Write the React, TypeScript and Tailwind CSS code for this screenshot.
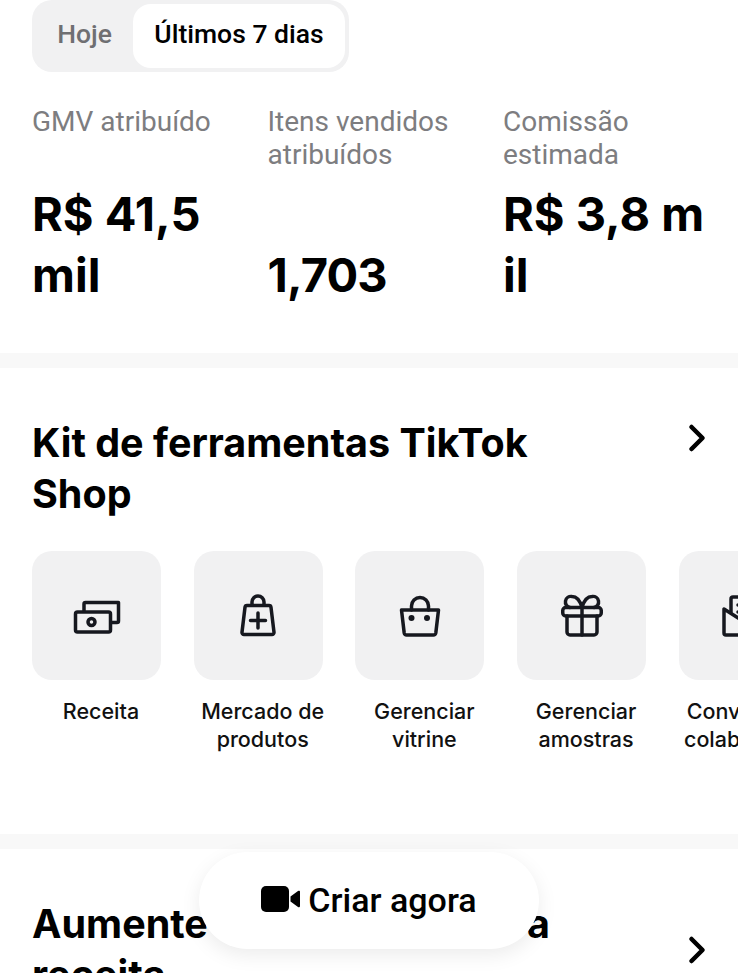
import { ChevronRight } from "lucide-react";
import type { ReactNode } from "react";

const metrics = [
  { label: "GMV atribuído", value: ["R$ 41,5", "mil"], valueClass: "" },
  { label: "Itens vendidos atribuídos", value: ["1,703"], valueClass: "tracking-[-0.8px]" },
  { label: "Comissão estimada", value: ["R$ 3,8 m", "il"], valueClass: "" },
];

function IconFrame({ children }: { children: ReactNode }) {
  return (
    <svg
      viewBox="0 0 48 48"
      className="h-12 w-12 text-[#16181f]"
      fill="none"
      stroke="currentColor"
      strokeWidth="3.5"
      strokeLinecap="round"
      strokeLinejoin="round"
    >
      {children}
    </svg>
  );
}

const tools: { label: string; icon: ReactNode }[] = [
  {
    label: "Receita",
    icon: (
      <IconFrame>
        <rect x="2.5" y="20" width="35" height="20" rx="2" />
        <path d="M11 19v-7a1.5 1.5 0 0 1 1.500-1.500H45.500V29a1.500 1.500 0 0 1-1.500 1.500h-6" />
        <circle cx="18.500" cy="30" r="3.500" />
      </IconFrame>
    ),
  },
  {
    label: "Mercado de produtos",
    icon: (
      <IconFrame>
        <path d="M13 13.500h22a2 2 0 0 1 2 1.800l3 25a2 2 0 0 1-2 2.200H10a2 2 0 0 1-2-2.200l3-25a2 2 0 0 1 2-1.800z" />
        <path d="M18 13v-3a6 6 0 0 1 12 0v3" />
        <path d="M24 21v15M16.500 28.500h15" />
      </IconFrame>
    ),
  },
  {
    label: "Gerenciar vitrine",
    icon: (
      <IconFrame>
        <path d="M5.500 18h37l-2.700 23a2.500 2.500 0 0 1-2.500 2H10.700a2.500 2.500 0 0 1-2.500-2L5.500 18z" />
        <path d="M15.500 18v-4a8.500 8.500 0 0 1 17 0v4" />
        <circle cx="15.500" cy="26" r="3" fill="currentColor" stroke="none" />
        <circle cx="31" cy="26" r="3" fill="currentColor" stroke="none" />
      </IconFrame>
    ),
  },
  {
    label: "Gerenciar amostras",
    icon: (
      <IconFrame>
        <rect x="4.750" y="15.500" width="38.500" height="8.500" rx="3" />
        <path d="M9 24v16a3 3 0 0 0 3 3h24a3 3 0 0 0 3-3V24" />
        <path d="M24 15.500V43" />
        <path d="M24 15.500c-2-7-6-11-10-11a5.500 5.500 0 0 0-2 11M24 15.500c2-7 6-11 10-11a5.500 5.500 0 0 1 2 11" />
      </IconFrame>
    ),
  },
  {
    label: "Convites de colaboração",
    icon: (
      <IconFrame>
        <path d="M12 20V7a2 2 0 0 1 2-2h24v20" />
        <path d="M19 13h8M19 20h8" />
        <path d="M5 17v24a2 2 0 0 0 2 2h36V17L24 29 5 17z" />
      </IconFrame>
    ),
  },
];

export default function App() {
  return (
    <div className="relative h-[973px] w-[738px] overflow-hidden bg-white font-['Inter',sans-serif] text-black">
      {/* Period tabs and metrics */}
      <div className="px-8">
        <div className="flex h-[72px] w-[317px] items-center rounded-[20px] bg-[#f1f1f2] p-1 font-['Roboto',sans-serif] text-[26.500px] font-medium">
          <span className="w-[97px] pb-1 text-center text-[#6f6f72]">Hoje</span>
          <span className="flex h-16 w-[212px] items-center justify-center rounded-[18px] bg-white pb-1">Últimos 7 dias</span>
        </div>
        <div className="mt-[33px] grid h-[248px] grid-cols-[211.5px_211.5px_211.5px] gap-x-6">
          {metrics.map((metric) => (
            <div key={metric.label} className="flex flex-col">
              <div className="font-['Roboto',sans-serif] text-[28px] leading-[33px] text-[#7d7d80]">{metric.label}</div>
              <div className={`flex flex-1 flex-col justify-end pb-[48px] text-[47px] leading-[61px] font-bold ${metric.valueClass}`}>
                {metric.value.map((line) => (
                  <div key={line}>{line}</div>
                ))}
              </div>
            </div>
          ))}
        </div>
      </div>

      <div className="h-[15px] bg-[#f8f8f8]" />

      {/* TikTok Shop toolkit */}
      <div className="h-[466px] pt-[50px]">
        <div className="flex items-start justify-between pr-[19px] pl-8">
          <h2 className="w-[560px] text-[39.500px] leading-[51px] font-bold">Kit de ferramentas TikTok Shop</h2>
          <ChevronRight className="-mt-0.5 h-11 w-11" strokeWidth={2.5} />
        </div>
        <div className="mt-[31px] flex gap-[23.700px] pl-8">
          {tools.map((tool) => (
            <div key={tool.label} className="w-[138px] shrink-0">
              <div className="flex h-[129px] w-[129px] items-center justify-center rounded-[20px] bg-[#f1f1f2]">{tool.icon}</div>
              <div className="mt-[17px] text-center text-[21.500px] leading-[28px] font-medium text-[#111]">{tool.label}</div>
            </div>
          ))}
        </div>
      </div>

      <div className="h-[15px] bg-[#f8f8f8]" />

      {/* Next section, cut off by the window */}
      <div className="flex items-center justify-between pt-[50px] pr-[19px] pl-8">
        <h2 className="w-[560px] text-[39.500px] leading-[51px] font-bold [word-spacing:3px]">Aumente as vendas com a receita</h2>
        <ChevronRight className="h-11 w-11" strokeWidth={2.5} />
      </div>

      {/* Floating create button */}
      <div className="absolute top-[852px] left-[199px] flex h-[97px] w-[340px] items-center justify-center gap-2 rounded-full bg-white font-['Roboto',sans-serif] text-[34px] font-medium shadow-[0_6px_20px_rgba(0,0,0,0.08)]">
        <svg viewBox="0 0 39 26" className="-mt-1 h-[26px] w-[39px]" fill="currentColor">
          <rect x="0" y="0" width="28" height="26" rx="5" />
          <path d="M29.500 10.500l7.500-5.500a1.200 1.200 0 0 1 2 1v14a1.200 1.200 0 0 1-2 1l-7.500-5.500z" />
        </svg>
        <span>Criar agora</span>
      </div>
    </div>
  );
}
